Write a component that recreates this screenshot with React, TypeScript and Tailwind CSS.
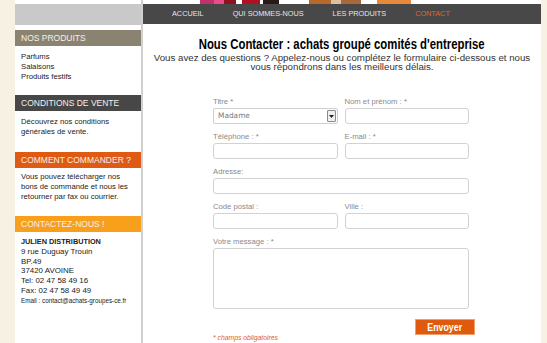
import React from 'react';

const SANS = "font-['Liberation_Sans',Arial,sans-serif]";
const DISPLAY = "font-['Liberation_Sans',Arial,sans-serif]";

const SideHeader: React.FC<{ color: string; children: React.ReactNode }> = ({ color, children }) => (
  <div className={`h-[16px] flex items-center pl-[6px] text-[8.5px] text-[#f4f1ea] ${color}`}>{children}</div>
);

const Field: React.FC<{ label: string; className?: string; children?: React.ReactNode }> = ({ label, className = '', children }) => (
  <div className={`flex flex-col ${className}`}>
    <span className="h-[12px] leading-[12px] text-[7.7px] text-[#8a8a8a]">{label}</span>
    {children ?? <div className="h-[16px] rounded-[3px] border border-[#d2d2d2] bg-white" />}
  </div>
);

const Sidebar: React.FC = () => (
  <aside className={`w-[126px] shrink-0 bg-white flex flex-col ${SANS}`}>
    <div className="h-[4px]" />
    <div className="h-[21px] bg-[#c9c9c9]" />
    <div className="h-[5px]" />

    <SideHeader color="bg-[#8b8371]">NOS PRODUITS</SideHeader>
    <ul className="pt-[6px] pl-[6px] text-[7.7px] leading-[10px] text-[#222]">
      <li>Parfums</li>
      <li>Salaisons</li>
      <li>Produits festifs</li>
    </ul>

    <div className="h-[13px]" />
    <SideHeader color="bg-[#474747]">CONDITIONS DE VENTE</SideHeader>
    <p className="pt-[6px] pl-[6px] pr-[8px] text-[7.7px] leading-[10px] text-[#222]">
      Découvrez nos conditions générales de vente.
    </p>

    <div className="h-[15px]" />
    <SideHeader color="bg-[#df5a12]">COMMENT COMMANDER ?</SideHeader>
    <p className="pt-[4px] pl-[6px] pr-[4px] text-[7.7px] leading-[10px] text-[#222]">
      Vous pouvez télécharger nos bons de commande et nous les retourner par fax ou courrier.
    </p>

    <div className="h-[14px]" />
    <SideHeader color="bg-[#f8a01c]">CONTACTEZ-NOUS !</SideHeader>
    <div className="pt-[5px] pl-[6px] text-[7.9px] leading-[9.8px] text-[#222]">
      <div className="font-bold text-[7.3px]">JULIEN DISTRIBUTION</div>
      <div>9 rue Duguay Trouin</div>
      <div>BP.49</div>
      <div>37420 AVOINE</div>
      <div>Tel: 02 47 58 49 16</div>
      <div>Fax: 02 47 58 49 49</div>
      <div className="text-[6.3px]">Email : contact@achats-groupes-ce.fr</div>
    </div>
  </aside>
);

const Banner: React.FC = () => (
  <div className="h-[4px] flex bg-white">
    <div className="w-[57px]" />
    <div className="w-[14px] bg-[#c0306a]" />
    <div className="w-[10px] bg-[#e84c8a]" />
    <div className="w-[12px] bg-[#8f1020]" />
    <div className="w-[6px]" />
    <div className="w-[18px] bg-[#b01020]" />
    <div className="w-[3px]" />
    <div className="w-[16px] bg-[#2a1a16]" />
    <div className="w-[30px]" />
    <div className="w-[22px] bg-[#b5692c]" />
    <div className="w-[10px] bg-[#d8c2a0]" />
    <div className="w-[20px] bg-[#a86a3a]" />
    <div className="w-[16px]" />
    <div className="w-[34px] bg-[#e8883a]" />
  </div>
);

const Nav: React.FC = () => (
  <nav className={`h-[20px] bg-[#484848] flex items-center pl-[29px] gap-[29px] text-[7.3px] text-[#e6e6e6] ${SANS}`}>
    <span>ACCUEIL</span>
    <span>QUI SOMMES-NOUS</span>
    <span>LES PRODUITS</span>
    <span className="text-[#e2622a]">CONTACT</span>
  </nav>
);

const ContactForm: React.FC = () => (
  <form className={`ml-[70px] w-[262px] mt-[25px] flex flex-col ${SANS}`} onSubmit={(e) => e.preventDefault()}>
    <div className="w-[256px] flex flex-col gap-[7px]">
      <div className="grid grid-cols-2 gap-[7px]">
        <Field label="Titre *">
          <div className="h-[16px] rounded-[2px] border border-[#cfcfcf] bg-white flex items-center justify-between pl-[4px] pr-[1px]">
            <span className="text-[7.4px] text-[#7a7a7a] font-['DejaVu_Sans',sans-serif]">Madame</span>
            <span className="w-[9px] h-[12px] border border-[#8a8a8a] rounded-[1px] bg-[#eeeeee] flex items-center justify-center">
              <svg width="5" height="3" viewBox="0 0 5 3"><path d="M0 0h5L2.5 3z" fill="#222" /></svg>
            </span>
          </div>
        </Field>
        <Field label="Nom et prénom : *" />
      </div>
      <div className="grid grid-cols-2 gap-[7px]">
        <Field label="Téléphone : *" />
        <Field label="E-mail : *" />
      </div>
      <Field label="Adresse:" />
      <div className="grid grid-cols-2 gap-[7px]">
        <Field label="Code postal :" />
        <Field label="Ville :" />
      </div>
      <Field label="Votre message : *">
        <div className="h-[61px] rounded-[3px] border border-[#d2d2d2] bg-white" />
      </Field>
    </div>
    <div className="flex justify-end mt-[10px]">
      <button
        type="submit"
        className={`w-[60px] h-[16px] bg-[#df5a0c] border border-[#f0a070] text-white font-bold text-[11px] leading-none flex items-center justify-center ${DISPLAY}`}
      >
        <span className="inline-block scale-x-80">Envoyer</span>
      </button>
    </div>
    <p className="text-[6.8px] italic text-[#e0602a] leading-[8px] -mt-[1px]">* champs obligatoires</p>
  </form>
);

const App: React.FC = () => {
  return (
    <div className="w-[547px] h-[343px] overflow-hidden bg-[#f6f1e2] flex pl-[15px]">
      <Sidebar />
      <div className="w-[2px] shrink-0 bg-[#d0d0d0]" />
      <main className="w-[398px] shrink-0 bg-white flex flex-col">
        <Banner />
        <Nav />
        <h1 className={`mt-[13px] text-center text-[14.2px] leading-[14px] font-bold text-black ${DISPLAY}`}>
          <span className="inline-block scale-x-80 whitespace-nowrap">Nous Contacter : achats groupé comités d'entreprise</span>
        </h1>
        <p className={`mt-[3px] text-center text-[9.7px] leading-[8.5px] text-[#333] px-[4px] ${SANS}`}>
          Vous avez des questions ? Appelez-nous ou complétez le formulaire ci-dessous et nous vous répondrons dans les meilleurs délais.
        </p>
        <ContactForm />
      </main>
    </div>
  );
};

export default App;
